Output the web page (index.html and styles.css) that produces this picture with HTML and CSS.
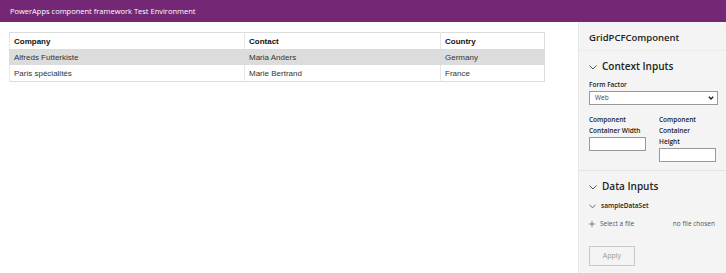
FILE: index.html
```html
<!DOCTYPE html>
<html><head>
  <meta charset="utf-8">
  <title>PowerApps component framework Test Environment</title>
  <link rel="stylesheet" href="styles.css">
</head>
<body>

<div class="topbar">PowerApps component framework Test Environment</div>

<div class="page">
  <div class="main">
    <table class="grid">
      <tr><th class="c1">Company</th><th class="c2">Contact</th><th>Country</th></tr>
      <tr class="sel"><td>Alfreds Futterkiste</td><td>Maria Anders</td><td>Germany</td></tr>
      <tr><td>Paris spécialités</td><td>Marie Bertrand</td><td>France</td></tr>
    </table>
  </div>

  <div class="panel">
    <div class="title">GridPCFComponent</div>

    <div class="section">
      <div class="sechead"><svg class="chev" viewBox="0 0 8 5"><polyline points="0.5,0.5 4,4 7.5,0.5"/></svg>Context Inputs</div>
      <label class="lbl first">Form Factor</label>
      <div class="select">Web<svg class="caret" viewBox="0 0 6 4"><polyline points="0.8,0.8 3,3 5.2,0.8"/></svg></div>
      <div class="pair">
        <div class="field">
          <label class="lbl">Component<br>Container Width</label>
          <div class="input"></div>
        </div>
        <div class="field">
          <label class="lbl">Component<br>Container<br>Height</label>
          <div class="input"></div>
        </div>
      </div>
    </div>

    <div class="section last">
      <div class="sechead"><svg class="chev" viewBox="0 0 8 5"><polyline points="0.5,0.5 4,4 7.5,0.5"/></svg>Data Inputs</div>
      <div class="subhead"><svg class="chev sm" viewBox="0 0 8 5"><polyline points="0.5,0.5 4,4 7.5,0.5"/></svg>sampleDataSet</div>
      <div class="filerow">
        <span class="pick"><svg class="plus" viewBox="0 0 6 6"><path d="M3 0V6M0 3H6"/></svg>Select a file</span>
        <span>no file chosen</span>
      </div>
      <div class="apply">Apply</div>
    </div>
  </div>
</div>

</body></html>
```

FILE: styles.css
```css
body,html { margin:0; padding:0; background:white; height:100%; }
body { font-family: "Open Sans", "Noto Sans", sans-serif; overflow:hidden; }

.topbar {
  height: 22px;
  background: #742774;
  color: white;
  font-size: 7.5px;
  line-height: 23px;
  padding-left: 10px;
  box-sizing: border-box;
}

.page {
  display: flex;
  height: 251px;
}
.main {
  flex: 1;
  padding: 10px 0 0 9px;
}

.grid {
  width: 536px;
  border-collapse: collapse;
  border: 1px solid #dcdcdc;
  font-family: "Liberation Sans", Arial, sans-serif;
  font-size: 8px;
  color: #333;
}
.grid th, .grid td {
  height: 16px;
  padding: 0 4px;
  text-align: left;
  border-left: 1px solid #e6e6e6;
}
.grid th { font-weight: bold; color: #111; }
.grid .c1 { width: 226px; }
.grid .c2 { width: 187px; }
.grid .sel td { background: #dcdcdc; border-left-color: #dcdcdc; }

.panel {
  width: 147px;
  background: #f4f4f4;
  border-left: 1px solid #e8e8e8;
  color: #222;
}
.title {
  font-size: 9.5px;
  font-weight: 600;
  padding: 9px 0 0 10px;
  height: 19px;
  border-bottom: 1px solid #ebebeb;
}
.section {
  padding: 6px 9px 8px 10px;
  border-bottom: 1px solid #e4e4e4;
}
.section.last { border-bottom: none; padding-top: 6px; }
.sechead {
  font-size: 10px;
  font-weight: 600;
  height: 18px;
  display: flex;
  align-items: center;
}
.chev {
  width: 8px;
  height: 5px;
  margin: 2px 5px 0 0;
  fill: none;
  stroke: #444;
  stroke-width: 0.9;
}
.chev.sm { width: 7px; margin-right: 5px; }

.lbl {
  display: block;
  font-size: 6.5px;
  font-weight: 600;
  line-height: 11px;
  color: #222;
}
.lbl.first { margin-top: 4px; }
.select {
  margin-top: 1px;
  height: 14px;
  width: 129px;
  box-sizing: border-box;
  border: 1px solid #999;
  background: white;
  font-size: 6.5px;
  line-height: 12px;
  padding-left: 5px;
  color: #444;
  display: flex;
  justify-content: space-between;
  align-items: center;
}
.caret {
  width: 6px;
  height: 4px;
  margin-right: 3px;
  fill: none;
  stroke: #222;
  stroke-width: 1.4;
}
.pair {
  display: flex;
  gap: 13px;
  margin-top: 9px;
}
.input {
  background: white;
  border: 1px solid #999;
  width: 57px;
  height: 14px;
  box-sizing: border-box;
  margin-top: 1px;
}

.subhead {
  font-size: 6.5px;
  font-weight: 600;
  margin-top: 3px;
  display: flex;
  align-items: center;
  height: 14px;
}
.filerow {
  display: flex;
  justify-content: space-between;
  align-items: center;
  font-size: 6.5px;
  color: #555;
  margin-top: 7px;
  padding-right: 2px;
}
.pick { display: flex; align-items: center; }
.plus {
  width: 6px;
  height: 6px;
  margin-right: 5px;
  stroke: #666;
  stroke-width: 0.8;
}
.apply {
  margin-top: 18px;
  width: 46px;
  height: 20px;
  box-sizing: border-box;
  border: 1px solid #c8c8c8;
  background: #f4f4f4;
  color: #999;
  font-size: 7px;
  text-align: center;
  line-height: 18px;
}
```
